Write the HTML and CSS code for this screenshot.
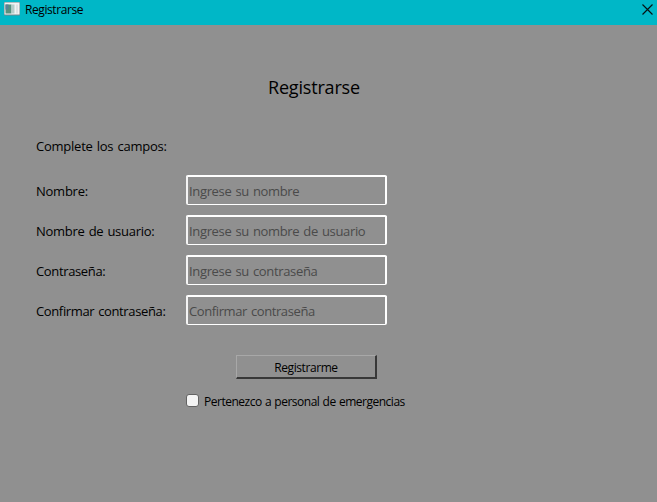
FILE: index.html
```html
<!DOCTYPE html>
<html lang="es">
<head>
<meta charset="utf-8">
<title>Registrarse</title>
<link rel="stylesheet" href="styles.css">
</head>
<body>
<header class="titlebar">
  <svg class="app-icon" width="16" height="14" viewBox="0 0 16 14">
    <rect x="0" y="0" width="16" height="13.5" rx="1" fill="#74858a"/>
    <rect x="0.5" y="0.5" width="15" height="12" fill="#f1f3f3"/>
    <rect x="1.5" y="2.5" width="6" height="9" fill="#57917f"/>
    <rect x="1.5" y="2.5" width="3" height="5" fill="#5a8298"/>
    <rect x="7.5" y="2.5" width="3" height="9" fill="#b5cdca"/>
    <rect x="12" y="2.5" width="2" height="9" fill="#dde2e3"/>
  </svg>
  <span class="caption">Registrarse</span>
  <svg class="close" width="11" height="11" viewBox="0 0 11 11"><path d="M.5.5l10 10M10.5.5l-10 10" stroke="#061314" stroke-width="1.15"/></svg>
</header>
<main class="content">
  <h1 class="heading">Registrarse</h1>
  <p class="intro">Complete los campos:</p>
  <form class="form">
    <label class="t-name" for="n">Nombre:</label><input id="n" class="p-name" placeholder="Ingrese su nombre">
    <label class="t-user" for="u">Nombre de usuario:</label><input id="u" class="p-user" placeholder="Ingrese su nombre de usuario">
    <label class="t-pass" for="p">Contraseña:</label><input id="p" class="p-pass" type="password" placeholder="Ingrese su contraseña">
    <label class="t-conf" for="c">Confirmar contraseña:</label><input id="c" class="p-conf" type="password" placeholder="Confirmar contraseña">
  </form>
  <button class="submit" type="button">Registrarme</button>
  <label class="check"><input type="checkbox" class="box"><span class="t-check">Pertenezco a personal de emergencias</span></label>
</main>
</body>
</html>
```
FILE: styles.css
```css
* { box-sizing: border-box; }
body {
  margin: 0;
  height: 502px;
  overflow: hidden;
  background: #909090;
  color: #000;
  font-family: "Open Sans", "Noto Sans", sans-serif;
  font-size: 13px;
}
.titlebar {
  display: flex;
  align-items: flex-start;
  height: 25px;
  padding: 2px 4px 0 4px;
  background: #00b7c7;
}
.caption {
  margin-left: 5px;
  font-size: 12px;
  line-height: 16px;
  letter-spacing: -0.42px;
}
.close { margin: 2px 0 0 auto; }
.content { padding-left: 36px; }
.heading {
  margin: 0 0 0 232px;
  padding-top: 50px;
  font-size: 18px;
  line-height: 25px;
  font-weight: 400;
  letter-spacing: -0.18px;
}
.intro {
  margin: 36px 0 0;
  line-height: 20px;
  letter-spacing: -0.24px;
  word-spacing: 1px;
}
.form {
  display: grid;
  grid-template-columns: 150px 201px;
  grid-auto-rows: 30px;
  row-gap: 10px;
  margin-top: 19px;
}
.form label { line-height: 32px; }
.form input {
  width: 201px;
  height: 30px;
  padding: 0 1px;
  border: 2px solid #fff;
  border-left-color: #f4f4f4;
  border-bottom-width: 1px;
  border-radius: 2px;
  background: #909090;
  font: inherit;
  outline: 0;
}
.form input::placeholder { color: #4a4a4a; opacity: 1; }
.form .t-name { letter-spacing: -0.25px; }
.form .t-user { letter-spacing: -0.28px; word-spacing: 1px; }
.form .t-pass { letter-spacing: -0.36px; }
.form .t-conf { letter-spacing: -0.37px; word-spacing: 1px; }
.form .p-name { letter-spacing: -0.34px; word-spacing: 1px; }
.form .p-user { letter-spacing: -0.34px; word-spacing: 1px; }
.form .p-pass { letter-spacing: -0.34px; word-spacing: 1px; }
.form .p-conf { letter-spacing: -0.4px; word-spacing: 1px; }
.submit {
  display: block;
  width: 141px;
  height: 24px;
  margin: 30px 0 0 200px;
  padding: 1px 0 0;
  border: solid;
  border-width: 1px 2px 2px 1px;
  border-color: #a8a8a8 #383838 #383838 #a8a8a8;
  background: #909090;
  color: #000;
  font: inherit;
  font-size: 12px;
  letter-spacing: -0.42px;
}
.check {
  display: flex;
  align-items: center;
  height: 20px;
  margin: 12px 0 0 150px;
  font-size: 12px;
  letter-spacing: -0.49px;
  word-spacing: 0.6px;
}
.box {
  appearance: none;
  width: 13px;
  height: 13px;
  margin: 0 5px 1px 0;
  border: 1px solid #626262;
  border-radius: 3px;
  background: #f3f3f3;
}
```
